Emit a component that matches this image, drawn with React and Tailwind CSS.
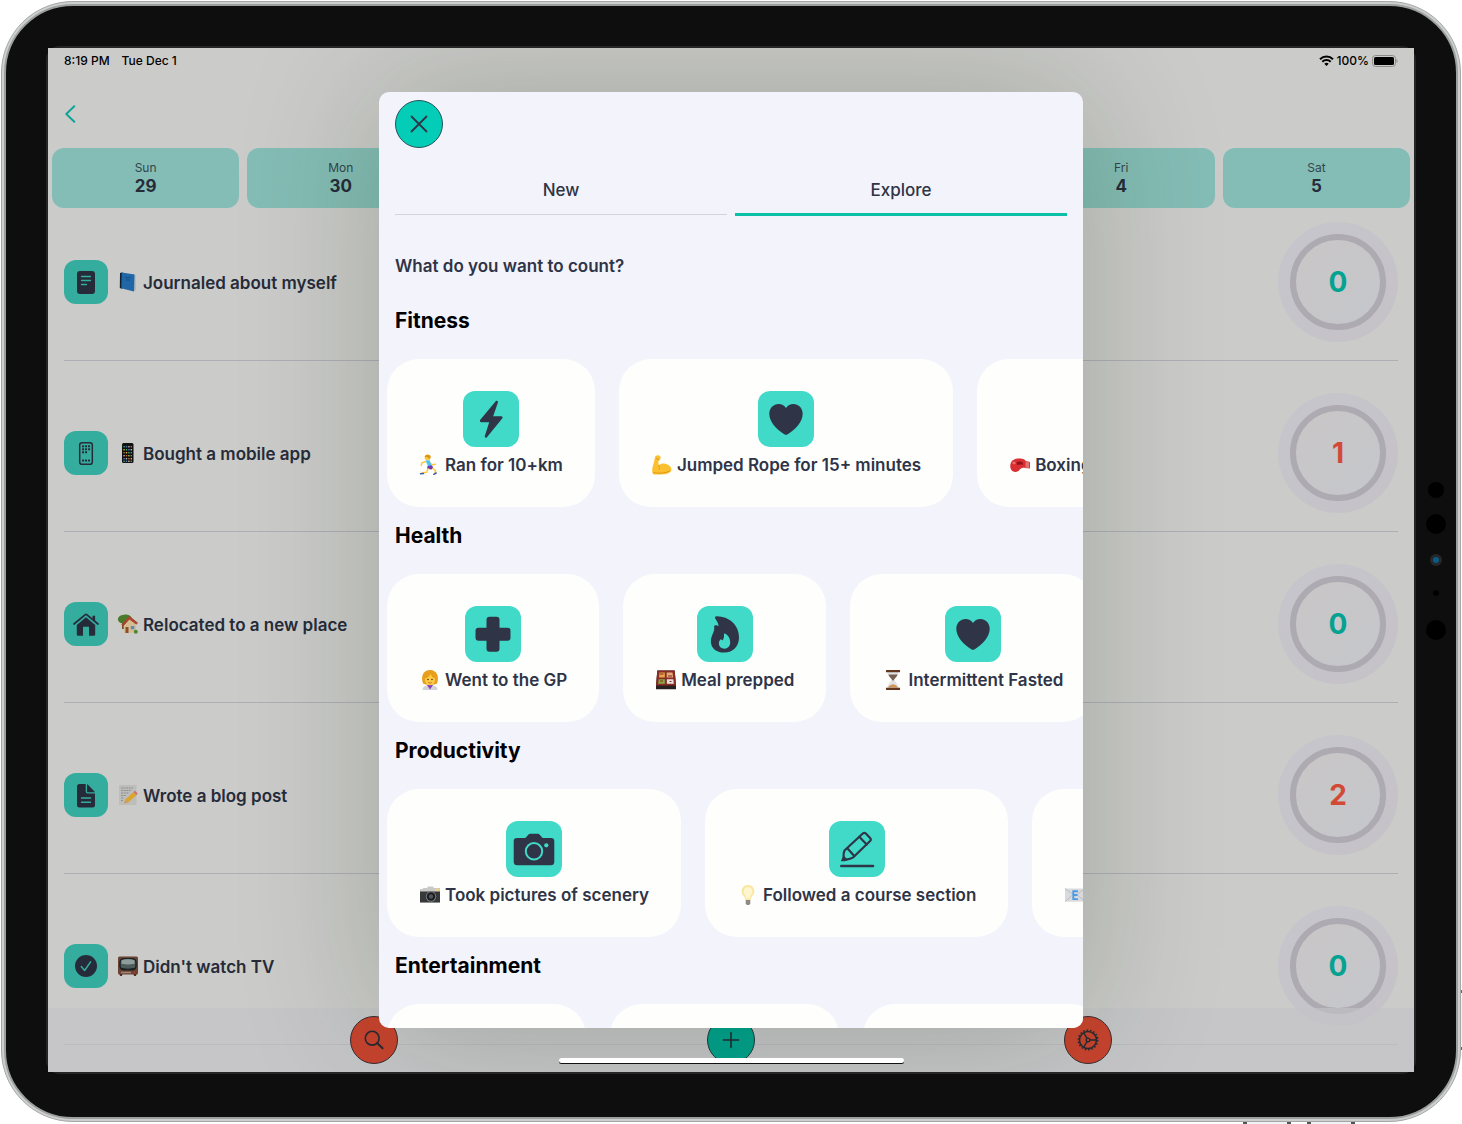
import React from "react";

/* ---------- tile icons ---------- */

const Note = () => (
  <svg viewBox="0 0 44 44" className="size-full">
    <rect x="13" y="11" width="18" height="23" rx="3" fill="#262b3a" />
    <g stroke="#34ad9f" strokeWidth="1.3" strokeLinecap="round">
      <path d="M17.500 16.500h9M17.500 20.500h9M17.500 24.500h5" />
    </g>
  </svg>
);

const Phone = () => (
  <svg viewBox="0 0 44 44" className="size-full">
    <rect x="15.700" y="11.700" width="12.600" height="21.600" rx="2.400" fill="none" stroke="#262b3a" strokeWidth="1.500" />
    <g fill="#262b3a">
      {[14.2, 17.2, 20.2].map((y, r) =>
        [18, 21, 24].map((x, c) => (r === 2 && c === 2 ? null : <rect key={`${x}-${y}`} x={x} y={y} width="2.100" height="2.100" rx="0.500" />))
      )}
      {[18, 21, 24].map((x) => (
        <rect key={x} x={x} y="28.500" width="2.100" height="2.100" rx="0.500" />
      ))}
    </g>
  </svg>
);

const House = () => (
  <svg viewBox="0 0 44 44" className="size-full">
    <path d="M22 15.200 12.800 23v9.200c0 .9.700 1.600 1.600 1.600h4.600v-9h6v9h4.600c.9 0 1.600-.7 1.600-1.600V23z" fill="#262b3a" />
    <path d="M10 22 21.300 12.600a1.200 1.200 0 0 1 1.400 0L34 22" fill="none" stroke="#262b3a" strokeWidth="1.700" strokeLinecap="round" />
    <path d="M28.500 13.800h2.600v5.600l-2.600-2.200z" fill="#262b3a" />
  </svg>
);

const Doc = () => (
  <svg viewBox="0 0 44 44" className="size-full">
    <path d="M21.700 11H15.500A2.500 2.500 0 0 0 13 13.500v18.500a2.500 2.500 0 0 0 2.500 2.500h13A2.500 2.500 0 0 0 31 32V20.500h-7.300a2 2 0 0 1-2-2z" fill="#262b3a" />
    <path d="M23 11.200v7c0 .6.400 1 1 1h6.800c-.2-.5-.4-.8-.8-1.200l-5.800-6c-.4-.4-.8-.7-1.200-.8z" fill="#262b3a" />
    <path d="M17.500 25h9M17.500 29.300h9" stroke="#34ad9f" strokeWidth="1.400" strokeLinecap="round" />
  </svg>
);

const Check = () => (
  <svg viewBox="0 0 44 44" className="size-full">
    <circle cx="22" cy="22" r="11" fill="#262b3a" />
    <path d="m17.300 22.600 3.300 3.900 6-8.600" fill="none" stroke="#34ad9f" strokeWidth="1.500" strokeLinecap="round" strokeLinejoin="round" />
  </svg>
);

const Bolt = () => (
  <svg viewBox="0 0 56 56" className="size-full">
    <path d="M32.700 10.300 17.300 28.800c-.8 1-.3 2.400 1 2.400h7.900l-4.400 13.900c-.4 1.300 1.200 2.200 2.100 1.100l15.300-18.600c.8-1 .3-2.300-.9-2.300H30.200l4.700-13.800c.4-1.400-1.200-2.300-2.200-1.200z" fill="#2f3546" />
  </svg>
);

const Heart = () => (
  <svg viewBox="0 0 56 56" className="size-full">
    <path d="M28 17c-1.700-2.700-4.300-4-7.300-4-5.400 0-9.400 4.300-9.400 9.800 0 8.700 8.200 16.600 15 20.400.7.400 1.200.6 1.700.6s1-.2 1.700-.6c6.800-3.800 15-11.700 15-20.400 0-5.500-4-9.800-9.400-9.800-3 0-5.600 1.300-7.300 4z" fill="#2f3546" />
  </svg>
);

const Cross = () => (
  <svg viewBox="0 0 56 56" className="size-full">
    <rect x="21.500" y="10.700" width="13" height="35" rx="3" fill="#2f3546" />
    <rect x="10.500" y="21.700" width="35" height="13" rx="3" fill="#2f3546" />
  </svg>
);

const Flame = () => (
  <svg viewBox="0 0 56 56" className="size-full">
    <path d="M19.800 10.200c-1.600-.2-2.300 1.300-1.400 2.600 1.500 2.300 3 4.400 3.200 7.300-.9-.8-1.700-.9-2.900-.9-1.300 0-1.700.7-1.500 1.900.7 5.300-3.300 8-3.300 14.300 0 6.500 5 11.100 13.400 11.100 9 0 14.700-6.400 14.700-15.300C42 18.800 32 10.400 19.800 10.200z" fill="#2f3546" />
    <path d="M28 27.500c-.7-.3-1.100.2-1 .9.300 2.300-.4 4.300-1.400 6.200-.6-.9-1.100-1.300-1.900-1.400-1.300 1.200-1.800 2.700-1.800 4.300 0 3 2.300 5.200 5.600 5.200s5.700-2.500 5.700-6.100c0-4.100-2.100-7.500-5.200-9.100z" fill="#41dac9" />
  </svg>
);

const Camera = () => (
  <svg viewBox="0 0 56 56" className="size-full">
    <path d="M11 17h7.500c.8 0 1.200-.3 1.800-1l1.500-1.800c1-1.100 1.800-1.500 3.400-1.500h5.600c1.600 0 2.400.4 3.400 1.500L35.700 16c.6.700 1 1 1.800 1H45a3.300 3.300 0 0 1 3.300 3.300v20.500a3.500 3.500 0 0 1-3.500 3.500H11.200a3.500 3.500 0 0 1-3.500-3.500V20.300A3.300 3.300 0 0 1 11 17z" fill="#2f3546" />
    <circle cx="28" cy="30.300" r="8.200" fill="none" stroke="#41dac9" strokeWidth="2" />
    <circle cx="40.300" cy="24.300" r="2.100" fill="#41dac9" />
  </svg>
);

const Pencil = () => (
  <svg viewBox="0 0 56 56" className="size-full" fill="none" stroke="#2f3546" strokeWidth="2.200" strokeLinecap="round" strokeLinejoin="round">
    <path d="M15.500 29.500 33.800 12.500a2.200 2.200 0 0 1 3 0l4.300 4.500a2.200 2.200 0 0 1 0 3L24.300 36.300c-3 2-6.800 2.300-9.800 2.900.4-3.500-.6-6 1-9.700z" />
    <path d="M30.300 15.800l7.400 7.600M18.500 27.500l6.800 7.500" />
    <path d="m15 35.500 3.300 3.300-5.600 1z" fill="#2f3546" strokeWidth="1" />
    <path d="M12.300 45h31.700" strokeWidth="2.600" />
  </svg>
);

/* ---------- small colour pictograms ---------- */

const Glyph = ({ children }) => (
  <svg viewBox="0 0 22 22" className="size-[22px] shrink-0" aria-hidden="true">
    {children}
  </svg>
);

const Book = () => (
  <Glyph>
    <path d="m3 2 2-.6 1 .3-.5 16.300L2.800 17z" fill="#15202e" />
    <path d="M5 17.500 17 20.500 19 18.500 18.500 4 16 3z" fill="#aeb7bf" />
    <path d="M4.700 1.600 17.500 3.600 17 20.500 4.300 17.300z" fill="#1f67a6" />
    <path d="M8 6.500h5.500M9 9h4" stroke="#174f83" strokeWidth="1" />
  </Glyph>
);

const Mobile = () => (
  <Glyph>
    <rect x="5" y="1" width="11.500" height="20" rx="1.500" fill="#111" />
    {[4, 7, 10, 13, 16, 18.6].map((y, r) =>
      [6.4, 8.8, 11.2, 13.6].map((x, c) => (
        <rect key={`${r}${c}`} x={x} y={y} width="1.400" height="1.400" fill={["#35b36a", "#d8602f", "#5a7bd0", "#c9b23a", "#b8b8b8"][(r * 3 + c * 2) % 5]} />
      ))
    )}
  </Glyph>
);

const HomeTree = () => (
  <Glyph>
    <path d="M5 8h3v8H5z" fill="#77522f" />
    <path d="M1 7c-.5-2.500 2-4.800 4.500-5C9 .5 14 2 14.500 5c.5 3-4 4-6 4.500C5 11 1.500 10 1 7z" fill="#4a7a2c" />
    <path d="M6.500 11 12 5.500l7 4.500v9.500l-12 .5z" fill="#d4bd93" />
    <path d="M12.300 3.300 20.500 10l-1.300 1-6.800-5-6.400 7-1.200-1z" fill="#a9452f" stroke="#a9452f" />
    <path d="M8.500 14h3v6h-3z" fill="#8d4e2d" />
    <path d="M13.800 13h3.500v3.300h-3.500z" fill="#5c8eb0" />
    <circle cx="18.800" cy="18.800" r="2" fill="#4d8831" />
  </Glyph>
);

const Memo = () => (
  <Glyph>
    <path d="M2 1h17.500v20H2z" fill="#bdbdbc" />
    <path d="M4 4h12M4 6.500h10M4 9h8M4 11.500h5M4 14h3M4 16.500h2" stroke="#85878a" strokeWidth=".8" strokeDasharray="2 .6" />
    <path d="m7 19.500 1.300-4L16.500 8l3 3-8.300 7.500z" fill="#dca52c" />
    <path d="m16.500 8 1.500-1.200 2.700 2.800L19.500 11z" fill="#cf6b70" />
    <path d="m7 19.500 1.300-4 2.900 3z" fill="#c79f72" />
  </Glyph>
);

const Tv = () => (
  <Glyph>
    <rect x="1" y="1.500" width="20" height="18" rx="1.500" fill="#6b4335" />
    <path d="M2.500 19h3l-.6 2H3zM16.500 19h3l-.5 2h-2z" fill="#51301f" />
    <rect x="2.300" y="3" width="17.400" height="12.500" rx="4.500" fill="#1b2222" />
    <path d="M4.300 5c3-1.500 10.400-1.500 13.400 0 .8 1 .7 6.500.3 7.500-4 1.500-10 1.500-14 0-.4-1-.5-6.500.3-7.500z" fill="#4d5b59" />
    <path d="M4.800 5.200c3-1.200 9.400-1.200 12.400 0 .5 1 .5 2.500.3 3.500-4 1-9 1-13 0-.2-1-.2-2.500.3-3.500z" fill="#8d9d9b" />
    <path d="M4 17.500h10" stroke="#a58673" strokeWidth="1.500" />
    <circle cx="17.500" cy="17.500" r="1" fill="#b03c2c" />
  </Glyph>
);

const Runner = () => (
  <Glyph>
    <circle cx="8.500" cy="3.500" r="2.900" fill="#ffc93f" />
    <path d="M5.800 3C6 .8 9.500 0 11.400 1.800c.6 1.200 0 2.600-.8 3.300C9.500 3.500 8 3 5.800 3z" fill="#dd9411" />
    <path d="m7 7.500-4 1.300-.8 2.700M10.500 8.500l3 2.300 3-.6" fill="none" stroke="#ffc93f" strokeWidth="1.500" strokeLinecap="round" strokeLinejoin="round" />
    <path d="m6.700 6.500 4-.3 1.800 5.600-3.500.7z" fill="#4cc5ee" />
    <path d="m8.600 12 4.300-.8 1.600 3-2 1.300-4.500-.8z" fill="#7437b5" />
    <path d="m9 14.700-1.300 3.500-4.500.5M13.800 14.500l2.800 2-.8 2.800" fill="none" stroke="#ffc93f" strokeWidth="1.500" strokeLinecap="round" strokeLinejoin="round" />
    <path d="m1.500 19.800 3-.3M14.800 20.300l2.400-1.300" stroke="#3b5bb5" strokeWidth="1.500" strokeLinecap="round" />
  </Glyph>
);

const Muscle = () => (
  <Glyph>
    <path d="M4 3.200C4.500 1.500 7 .8 8.500 1.700c1.300.8 1.500 2.600.6 3.700L7.700 6.500c-.4 1.800-.4 3.300.2 4.700 2-2.200 6-2.400 8.500-.6 2.800 1.200 4 3.300 4 5.200 0 3-5 4.700-9.500 4.700H3C.6 20 1 14 2.300 10.500 3 8 3.600 5.500 4 3.200z" fill="#fbc02f" />
    <path d="M5.500 4.500 8 5.800M8 11.500c.4 1.300.6 2.400.3 3.500M2.500 18.500c3 1.300 12 .8 16-1.300" fill="none" stroke="#dc9416" strokeWidth=".9" strokeLinecap="round" />
  </Glyph>
);

const Glove = () => (
  <Glyph>
    <path d="M15.500 6.500 21 8v6.500l-5.500-.6z" fill="#d8393a" />
    <path d="M17 7.500v6M19 8v6" stroke="#f3c9c5" strokeWidth=".8" />
    <path d="M2 8.500C3.500 5 8 4 12 4.500c3 .3 4.500 1.500 4.500 3v6c-3.500 0-5.500 1-7 3.500-2.500 1.800-6.500.8-7.700-2C1 13 1 10.500 2 8.500z" fill="#d92f33" />
    <path d="M7.500 8.500c2-1.500 5-1 6.500.5l-.5 2c-2-.8-4-.3-5.500 0z" fill="#8e1218" />
    <ellipse cx="5" cy="9" rx="1.700" ry="1.200" fill="#f26d68" />
  </Glyph>
);

const Doctor = () => (
  <Glyph>
    <path d="M3.500 21c0-3 2-4.800 7.500-4.800s7.500 1.800 7.500 4.800z" fill="#cfd4d8" />
    <path d="m8 16 3 4.500 3-4.500z" fill="#8b3fb8" />
    <path d="M4 14.500C1.500 8 4 1 11 1s9.500 7 7 13.500c-1.500 1.800-12.500 1.800-14 0z" fill="#e8a01c" />
    <ellipse cx="11" cy="10.500" rx="5" ry="5.800" fill="#ffcc45" />
    <path d="M5.500 9.500c3-.3 5-2.300 6-4.600C12.500 7.200 14 8.800 16.500 9.500V5l-4-3-6 1.500z" fill="#e8a01c" />
    <circle cx="9" cy="10.500" r=".8" fill="#4b3420" />
    <circle cx="13" cy="10.500" r=".8" fill="#4b3420" />
    <path d="M9.300 13.500c1 .7 2.400.7 3.400 0" fill="none" stroke="#a75b20" strokeWidth=".8" />
  </Glyph>
);

const Bento = () => (
  <Glyph>
    <path d="M2.300 1.500h17.400L21 16.500v3.800H1v-3.800z" fill="#26211f" />
    <path d="M2.300 1.500h17.400L21 16.500H1z" fill="#8a2c25" />
    <path d="M4.500 3.500h5.300v5H4z" fill="#e8a648" />
    <path d="M11.700 3.500h5.800l.6 5h-6.400z" fill="#e5ab7c" />
    <path d="M3.800 10.200h6v4.600H3.200z" fill="#86ab45" />
    <path d="M11.900 10.200h6.400l.5 4.600h-6.900z" fill="#e8e3de" />
    <path d="M5 5h3.500M13 7h4M14.500 12.500h2M5 12h3" stroke="#7c2c1f" strokeWidth="1" />
  </Glyph>
);

const Hourglass = () => (
  <Glyph>
    <path d="M5.500 3h11c0 4-3.700 6-3.700 8s3.700 4 3.700 8h-11c0-4 3.700-6 3.700-8S5.500 7 5.500 3z" fill="#dfe3e6" />
    <path d="M6.400 5.500h9.200c-.8 2.500-3.300 4-4.100 6h-1c-.8-2-3.300-3.500-4.100-6z" fill="#77604f" />
    <path d="M6 18.500c1-2 3.300-2.700 5-3.300 1.700.6 4 1.300 5 3.300z" fill="#d29550" />
    <path d="M4 1h14v2.200H4zM4 18.800h14V21H4z" fill="#65361f" />
  </Glyph>
);

const PhotoCamera = () => (
  <Glyph>
    <path d="M1 5h3V4h4l1-1.500h5L15 4h6v14.500H1z" fill="#c9cac8" />
    <path d="M1 7.500h20v11H1z" fill="#363839" />
    <circle cx="12" cy="12.500" r="5.200" fill="#77797a" />
    <circle cx="12" cy="12.500" r="4.200" fill="#1a1c1e" />
    <circle cx="12" cy="12.500" r="2.200" fill="#50565d" />
    <path d="M16 4.800h4v2h-4z" fill="#f0cf81" />
  </Glyph>
);

const Bulb = () => (
  <Glyph>
    <path d="M11 1c4 0 6.300 2.900 6.300 6.300 0 3.800-3.300 5-3.600 8.700H8.300C8 12.300 4.700 11.100 4.700 7.300 4.700 3.900 7 1 11 1z" fill="#fbe6a0" />
    <path d="M11 3c2.700 0 4.300 2 4.300 4.500 0 2.500-2.300 4-2.500 7h-3.600c-.2-3-2.500-4.500-2.500-7C6.700 5 8.300 3 11 3z" fill="#fff5cf" />
    <path d="M8.700 16h4.600v3.500L12.200 21H9.800l-1.100-1.500z" fill="#8d8b86" />
  </Glyph>
);

const Email = () => (
  <Glyph>
    <path d="M1 4.500h20v13.200H1z" fill="#d9dadd" />
    <path d="m1 4.500 10 7.500 10-7.500M1 17.700 8.500 11M21 17.700 13.500 11" fill="none" stroke="#b5b7bb" strokeWidth=".8" />
    <path d="M14 7.300H9.300v7.800H14M9.300 11h4.200" fill="none" stroke="#4c9be4" strokeWidth="1.900" />
  </Glyph>
);

/* ---------- data ---------- */

const days = [["Sun", 29], ["Mon", 30], [], [], [], ["Fri", 4], ["Sat", 5]];

const counters = [
  { Icon: Note, Pic: Book, label: "Journaled about myself", count: 0 },
  { Icon: Phone, Pic: Mobile, label: "Bought a mobile app", count: 1 },
  { Icon: House, Pic: HomeTree, label: "Relocated to a new place", count: 0 },
  { Icon: Doc, Pic: Memo, label: "Wrote a blog post", count: 2 },
  { Icon: Check, Pic: Tv, label: "Didn't watch TV", count: 0 },
];

const sections = [
  {
    title: "Fitness",
    cards: [
      { Icon: Bolt, Pic: Runner, label: "Ran for 10+km" },
      { Icon: Heart, Pic: Muscle, label: "Jumped Rope for 15+ minutes" },
      { Pic: Glove, label: "Boxing", width: "w-60" },
    ],
  },
  {
    title: "Health",
    cards: [
      { Icon: Cross, Pic: Doctor, label: "Went to the GP" },
      { Icon: Flame, Pic: Bento, label: "Meal prepped" },
      { Icon: Heart, Pic: Hourglass, label: "Intermittent Fasted" },
    ],
  },
  {
    title: "Productivity",
    cards: [
      { Icon: Camera, Pic: PhotoCamera, label: "Took pictures of scenery" },
      { Icon: Pencil, Pic: Bulb, label: "Followed a course section" },
      { Pic: Email, label: "", width: "w-60" },
    ],
  },
  {
    title: "Entertainment",
    cards: [{ width: "w-[199px]" }, { width: "w-[229px]" }, { width: "w-60" }],
  },
];

/* ---------- pieces ---------- */

const StatusBar = () => (
  <div className="flex h-6 items-center justify-between px-4 pt-px text-[12px] font-medium text-black">
    <div className="flex gap-3">
      <span>8:19 PM</span>
      <span>Tue Dec 1</span>
    </div>
    <div className="flex items-center gap-[3px]">
      <svg viewBox="0 0 15 11" className="h-[11px] w-[15px]" fill="none" stroke="#000" strokeWidth="2">
        <path d="M1 4.200a9.300 9.300 0 0 1 13 0M3.300 6.700a6 6 0 0 1 8.400 0" />
        <path d="M5.300 8.700a3.200 3.200 0 0 1 4.400 0L7.500 11z" fill="#000" stroke="none" />
      </svg>
      <span>100%</span>
      <svg viewBox="0 0 26 12" className="h-3 w-[26px]">
        <rect x=".5" y=".5" width="23" height="11" rx="3" fill="none" stroke="#8b8b8a" />
        <rect x="2" y="2" width="20" height="8" rx="1.500" fill="#000" />
        <path d="M24.500 4c1.500.5 1.500 3.500 0 4z" fill="#8b8b8a" />
      </svg>
    </div>
  </div>
);

const Counter = ({ Icon, Pic, label, count }) => (
  <li className="flex items-center justify-between border-b border-[#adaeb6] pb-[18px]">
    <div className="flex items-center gap-[9px]">
      <span className="size-11 rounded-xl bg-[#34ad9f]">
        <Icon />
      </span>
      <span className="flex items-center gap-1">
        <Pic />
        <span className="pt-0.5 text-[17px] leading-6 font-semibold text-[#262b3a]">{label}</span>
      </span>
    </div>
    <div className="flex size-[120px] items-center justify-center rounded-full bg-linear-to-br from-[#c5c6cc] to-[#c5c2c7]">
      <div
        className={`flex size-24 items-center justify-center rounded-full border-6 border-[#adabb1] bg-linear-to-br from-[#c9c6c6] to-[#c5c7cc] text-[28px] font-bold ${
          count ? "text-[#d24a35]" : "text-[#05a292]"
        }`}
      >
        {count}
      </div>
    </div>
  </li>
);

const Card = ({ Icon, Pic, label, width }) => (
  <button className={`flex h-[148px] shrink-0 flex-col items-center gap-1.5 rounded-[32px] bg-[#fefefd] px-8 pt-8 ${width || ""}`}>
    <span className={`size-14 rounded-xl ${Icon ? "bg-[#41dac9]" : ""}`}>{Icon && <Icon />}</span>
    {Pic && (
      <span className="flex h-6 items-center gap-1 self-start whitespace-nowrap text-[17px] leading-6 font-semibold text-[#2f3447]">
        <Pic />
        {label}
      </span>
    )}
  </button>
);

const Tab = ({ label, active }) => (
  <button role="tab" aria-selected={active} className="flex flex-col text-[17px] font-medium text-[#2f3447]">
    <span className="flex h-[47px] w-full items-center justify-center pt-0.5">{label}</span>
    <span className="flex h-[3px] w-full items-center">
      <span className={`w-full ${active ? "h-[3px] bg-[#0bbfa9]" : "h-px bg-[#d3d4df]"}`} />
    </span>
  </button>
);

const Sheet = () => (
  <div
    role="dialog"
    aria-label="Add counter"
    className="h-full w-full max-w-[704px] overflow-hidden rounded-[10px] bg-[#f3f3fc] shadow-[0_0_140px_rgba(20,40,0,0.22)]"
  >
    <div className="px-4 pt-2">
      <button aria-label="Close" className="flex size-12 items-center justify-center rounded-full border border-[#23545a] bg-[#04cdb7]">
        <svg viewBox="0 0 18 18" className="size-[18px]" stroke="#2f3546" strokeWidth="1.800" strokeLinecap="round">
          <path d="m1.500 1.500 15 15M16.500 1.500l-15 15" />
        </svg>
      </button>
      <div role="tablist" className="mt-[18px] grid grid-cols-2 gap-2">
        <Tab label="New" />
        <Tab label="Explore" active />
      </div>
      <p className="mt-[38px] mb-[14px] text-[17px] leading-6 font-semibold text-[#2f3447]">What do you want to count?</p>
    </div>
    {sections.map(({ title, cards }) => (
      <section key={title} className="pt-[15px]">
        <h2 className="mb-6 px-4 text-[21px] leading-7 font-bold text-black">{title}</h2>
        <div className="flex gap-6 pl-2">
          {cards.map((card, i) => (
            <Card key={i} {...card} />
          ))}
        </div>
      </section>
    ))}
  </div>
);

const round = "flex size-12 items-center justify-center rounded-full border";

const BottomBar = () => (
  <div className="absolute inset-x-0 bottom-0 h-16 bg-[rgba(195,195,199,0.63)] pt-2">
    <div className="mx-auto flex w-full max-w-[762px] justify-between">
      <button aria-label="Search" className={`${round} border-[#3c2b31] bg-[#c8432e]`}>
        <svg viewBox="0 0 20 20" className="size-5" fill="none" stroke="#262b33" strokeWidth="1.600" strokeLinecap="round">
          <circle cx="8.200" cy="8.200" r="6.900" />
          <path d="m13.300 13.300 5.300 5" strokeWidth="2" />
        </svg>
      </button>
      <button aria-label="Add" className={`${round} border-[#1f3a3c] bg-[#00a38e]`}>
        <svg viewBox="0 0 18 18" className="size-[18px]" stroke="#262b33" strokeWidth="1.600" strokeLinecap="round">
          <path d="M9 1.500v15M1.500 9h15" />
        </svg>
      </button>
      <button aria-label="Settings" className={`${round} border-[#3c2b31] bg-[#c8432e]`}>
        <svg viewBox="0 0 24 24" className="size-[22px]" fill="none" stroke="#262b33" strokeWidth="1.500">
          <circle cx="12" cy="12" r="9.300" strokeWidth="1.700" />
          <circle cx="12" cy="12" r="10.700" strokeWidth="1.500" strokeDasharray="1.700 2.035" />
          <circle cx="12" cy="12" r="2" />
          <path d="M14 12h7.200M11 10.300 7.300 4.200M11 13.700l-3.700 6.100" />
        </svg>
      </button>
    </div>
  </div>
);

export default function App() {
  return (
    <div className="relative min-h-screen overflow-hidden bg-white px-px pt-px pb-0.5 font-['Inter','Liberation_Sans',sans-serif]">
      {/* hardware buttons on the device edges */}
      <div className="absolute right-[107px] bottom-0 flex gap-4">
        <span className="h-[3px] w-12 border-x-4 border-[#555] bg-[#f1f2f5]" />
        <span className="h-[3px] w-12 border-x-4 border-[#555] bg-[#f1f2f5]" />
      </div>
      <div className="absolute right-0 bottom-[74px] h-[60px] w-[3px] border-y-3 border-[#666] bg-[#f1f2f5]" />

      <div className="relative rounded-[72px] border border-[#a6a8a8] bg-[#cdcfce] p-0.5">
        <div className="rounded-[69px] border-2 border-[#9c9fa0] bg-[#0e0e0e]">
          <div className="relative px-10 pt-10 pb-[43px]">
            <div className="rounded-[14px] bg-[#252527] p-0.5">
              <div className="relative overflow-hidden bg-[#cbcbc9]">
                <StatusBar />
                <div className="flex h-[76px] items-center px-4 pt-2">
                  <button aria-label="Back">
                    <svg viewBox="0 0 12 18" className="h-[18px] w-3" fill="none" stroke="#0ca395" strokeWidth="1.900" strokeLinecap="round" strokeLinejoin="round">
                      <path d="M10.300 1.200 2.300 9l8 7.800" />
                    </svg>
                  </button>
                </div>
                <div className="grid grid-cols-7 gap-2 px-1">
                  {days.map(([name, date], i) => (
                    <button key={i} className="flex h-[60px] flex-col items-center justify-center rounded-xl bg-[#84bdb5] text-[#262b3a]">
                      <span className="text-[12px] leading-4 text-[#33454d]">{name}</span>
                      <span className="text-[17px] leading-5 font-bold">{date}</span>
                    </button>
                  ))}
                </div>
                <ul className="flex flex-col gap-8 px-4 pt-[14px] pb-[27px]">
                  {counters.map((c) => (
                    <Counter key={c.label} {...c} />
                  ))}
                </ul>
                <BottomBar />
                <div className="absolute inset-0 flex justify-center py-11">
                  <Sheet />
                </div>
                <div className="absolute inset-x-0 bottom-[9px] flex justify-center">
                  <span className="h-[5px] w-[345px] rounded-full bg-white shadow-[0_1px_0_#111]" />
                </div>
              </div>
            </div>
            {/* camera and sensors */}
            <div className="absolute inset-y-0 right-2.5 flex w-5 flex-col items-center pt-[476px]">
              <span className="size-4 rounded-full bg-black" />
              <span className="mt-4 size-5 rounded-full bg-black" />
              <span className="mt-5 flex size-3 items-center justify-center rounded-full bg-[#24282b]">
                <span className="size-1.5 rounded-full bg-[#0c5a85]" />
              </span>
              <span className="mt-6 size-1.5 rounded-full bg-black" />
              <span className="mt-6 size-5 rounded-full bg-black" />
            </div>
          </div>
        </div>
      </div>
    </div>
  );
}
